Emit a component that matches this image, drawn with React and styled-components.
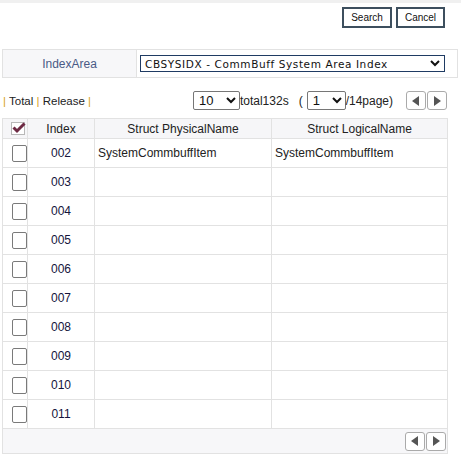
import React from "react"
import styled, { createGlobalStyle } from "styled-components"

const GlobalStyle = createGlobalStyle`
  body {
    margin: 0;
    background: #fff;
    font-family: "Liberation Sans", Arial, sans-serif;
    font-size: 12px;
    color: #222;
  }
`

const Page = styled.div`
  width: 461px;
  height: 465px;
  overflow: hidden;
`

const TopBand = styled.div`
  height: 3px;
  background: #f0f0f0;
`

const ButtonBar = styled.div`
  display: flex;
  justify-content: flex-end;
  gap: 4px;
  padding: 4px 16px 0 0;
`

const ActionButton = styled.button`
  width: ${({ w }) => w}px;
  height: 21px;
  padding: 0;
  border: 2px solid #3d4f5e;
  background: #fff;
  color: #111;
  font-family: "Liberation Sans", Arial, sans-serif;
  font-size: 10px;
  cursor: pointer;
`

const SearchRow = styled.div`
  display: grid;
  grid-template-columns: 134px 1fr;
  height: 27px;
  margin: 21px 3px 0 2px;
  border: 1px solid #e2e2e2;
`

const LabelCell = styled.div`
  display: flex;
  align-items: center;
  justify-content: center;
  background: #f7f7f9;
  border-right: 1px solid #e2e2e2;
  color: #4a5a86;
  font-size: 12px;
`

const FieldCell = styled.div`
  display: flex;
  align-items: center;
  padding: 0 12px 0 3px;
`

const AreaSelect = styled.div`
  flex: 1;
  height: 15px;
  display: flex;
  align-items: center;
  justify-content: space-between;
  padding: 0 4px 0 4px;
  border: 1px solid #1f3b63;
  font-family: "DejaVu Sans", Verdana, sans-serif;
  font-size: 10.5px;
  letter-spacing: 0.6px;
  color: #111;
  white-space: pre;
`

const Toolbar = styled.div`
  display: flex;
  align-items: center;
  height: 19px;
  margin: 13px 14px 0 3px;
`

const Links = styled.div`
  flex: 1;
  font-size: 11.5px;
  color: #222;
`

const Pipe = styled.span`
  color: #d9a21b;
`

const NativeSelect = styled.div`
  box-sizing: border-box;
  width: ${({ w }) => w}px;
  height: 19px;
  display: flex;
  align-items: center;
  justify-content: space-between;
  padding: 0 3px 0 5px;
  border: 1px solid #767676;
  border-radius: 2px;
  font-size: 13px;
  color: #111;
`

const PageText = styled.span`
  font-size: 12px;
  color: #222;
  margin-left: ${({ ml }) => ml || 0}px;
  margin-right: ${({ mr }) => mr || 0}px;
`

const ArrowGroup = styled.div`
  display: flex;
  gap: 1px;
  margin-left: ${({ ml }) => ml || 0}px;
`

const ArrowButton = styled.div`
  box-sizing: border-box;
  width: 20px;
  height: 19px;
  display: flex;
  align-items: center;
  justify-content: center;
  border: 1px solid #aaa;
  border-radius: 3px;
  background: #fff;
`

const Grid = styled.div`
  margin: 8px 13px 0 2px;
  border: 1px solid #e2e2e2;
`

const Row = styled.div`
  box-sizing: border-box;
  display: grid;
  grid-template-columns: 25px 67px 177px 1fr;
  height: ${({ head }) => (head ? 20 : 29)}px;
  background: ${({ head }) => (head ? "#f6f6f8" : "#fff")};
  border-bottom: 1px solid #e2e2e2;
`

const Cell = styled.div`
  display: flex;
  align-items: center;
  justify-content: ${({ center }) => (center ? "center" : "flex-start")};
  padding-left: ${({ center }) => (center ? 0 : 3)}px;
  border-right: ${({ last }) => (last ? "none" : "1px solid #e2e2e2")};
  font-size: 12px;
  color: ${({ num }) => (num ? "#14143c" : "#222")};
`

const Box = styled.div`
  box-sizing: border-box;
  width: 17px;
  height: 17px;
  margin-left: 6px;
  border: 1px solid #7a7a7a;
  border-radius: 2px;
  background: #fff;
`

const HeadCheck = styled.div`
  box-sizing: border-box;
  position: relative;
  width: 14px;
  height: 13px;
  margin-left: 5px;
  border: 1px solid #b8b8b8;
  background: #fff;
`

const Footer = styled.div`
  display: flex;
  justify-content: flex-end;
  align-items: center;
  height: 24px;
  padding-right: 1px;
  background: #f7f7f9;
`

const Tri = ({ dir }) => (
  <svg width="8" height="10" viewBox="0 0 8 10">
    {dir === "left" ? (
      <path d="M7 0 L7 10 L0 5 Z" fill="#555" />
    ) : (
      <path d="M1 0 L1 10 L8 5 Z" fill="#555" />
    )}
  </svg>
)

const Chevron = () => (
  <svg width="10" height="7" viewBox="0 0 10 7">
    <path d="M1 1 L5 5 L9 1" stroke="#111" strokeWidth="2" fill="none" />
  </svg>
)

const Arrows = ({ ml }) => (
  <ArrowGroup ml={ml}>
    <ArrowButton>
      <Tri dir="left" />
    </ArrowButton>
    <ArrowButton>
      <Tri dir="right" />
    </ArrowButton>
  </ArrowGroup>
)

const rows = [
  { idx: "002", phys: "SystemCommbuffItem", logi: "SystemCommbuffItem" },
  { idx: "003" },
  { idx: "004" },
  { idx: "005" },
  { idx: "006" },
  { idx: "007" },
  { idx: "008" },
  { idx: "009" },
  { idx: "010" },
  { idx: "011" },
]

export default function App() {
  return (
    <Page>
      <GlobalStyle />
      <TopBand />
      <ButtonBar>
        <ActionButton w={50}>Search</ActionButton>
        <ActionButton w={49}>Cancel</ActionButton>
      </ButtonBar>

      <SearchRow>
        <LabelCell>IndexArea</LabelCell>
        <FieldCell>
          <AreaSelect>
            <span>CBSYSIDX - CommBuff System Area Index</span>
            <Chevron />
          </AreaSelect>
        </FieldCell>
      </SearchRow>

      <Toolbar>
        <Links>
          <Pipe>|</Pipe> Total <Pipe>|</Pipe> Release <Pipe>|</Pipe>
        </Links>
        <NativeSelect w={47}>
          <span>10</span>
          <Chevron />
        </NativeSelect>
        <PageText mr={10}>total132s</PageText>
        <PageText mr={4}>(</PageText>
        <NativeSelect w={39}>
          <span>1</span>
          <Chevron />
        </NativeSelect>
        <PageText>/14page)</PageText>
        <Arrows ml={13} />
      </Toolbar>

      <Grid>
        <Row head>
          <Cell>
            <HeadCheck>
              <svg
                width="14"
                height="12"
                viewBox="0 0 14 12"
                style={{ position: "absolute", left: 0, top: -1 }}
              >
                <path
                  d="M1.5 5.5 L5 9 L12.5 1.5"
                  stroke="#6e2a44"
                  strokeWidth="3"
                  fill="none"
                />
              </svg>
            </HeadCheck>
          </Cell>
          <Cell center>Index</Cell>
          <Cell center>Struct PhysicalName</Cell>
          <Cell center last>
            Struct LogicalName
          </Cell>
        </Row>
        {rows.map((r) => (
          <Row key={r.idx}>
            <Cell>
              <Box />
            </Cell>
            <Cell center num>
              {r.idx}
            </Cell>
            <Cell>{r.phys}</Cell>
            <Cell last>{r.logi}</Cell>
          </Row>
        ))}
        <Footer>
          <Arrows />
        </Footer>
      </Grid>
    </Page>
  )
}
